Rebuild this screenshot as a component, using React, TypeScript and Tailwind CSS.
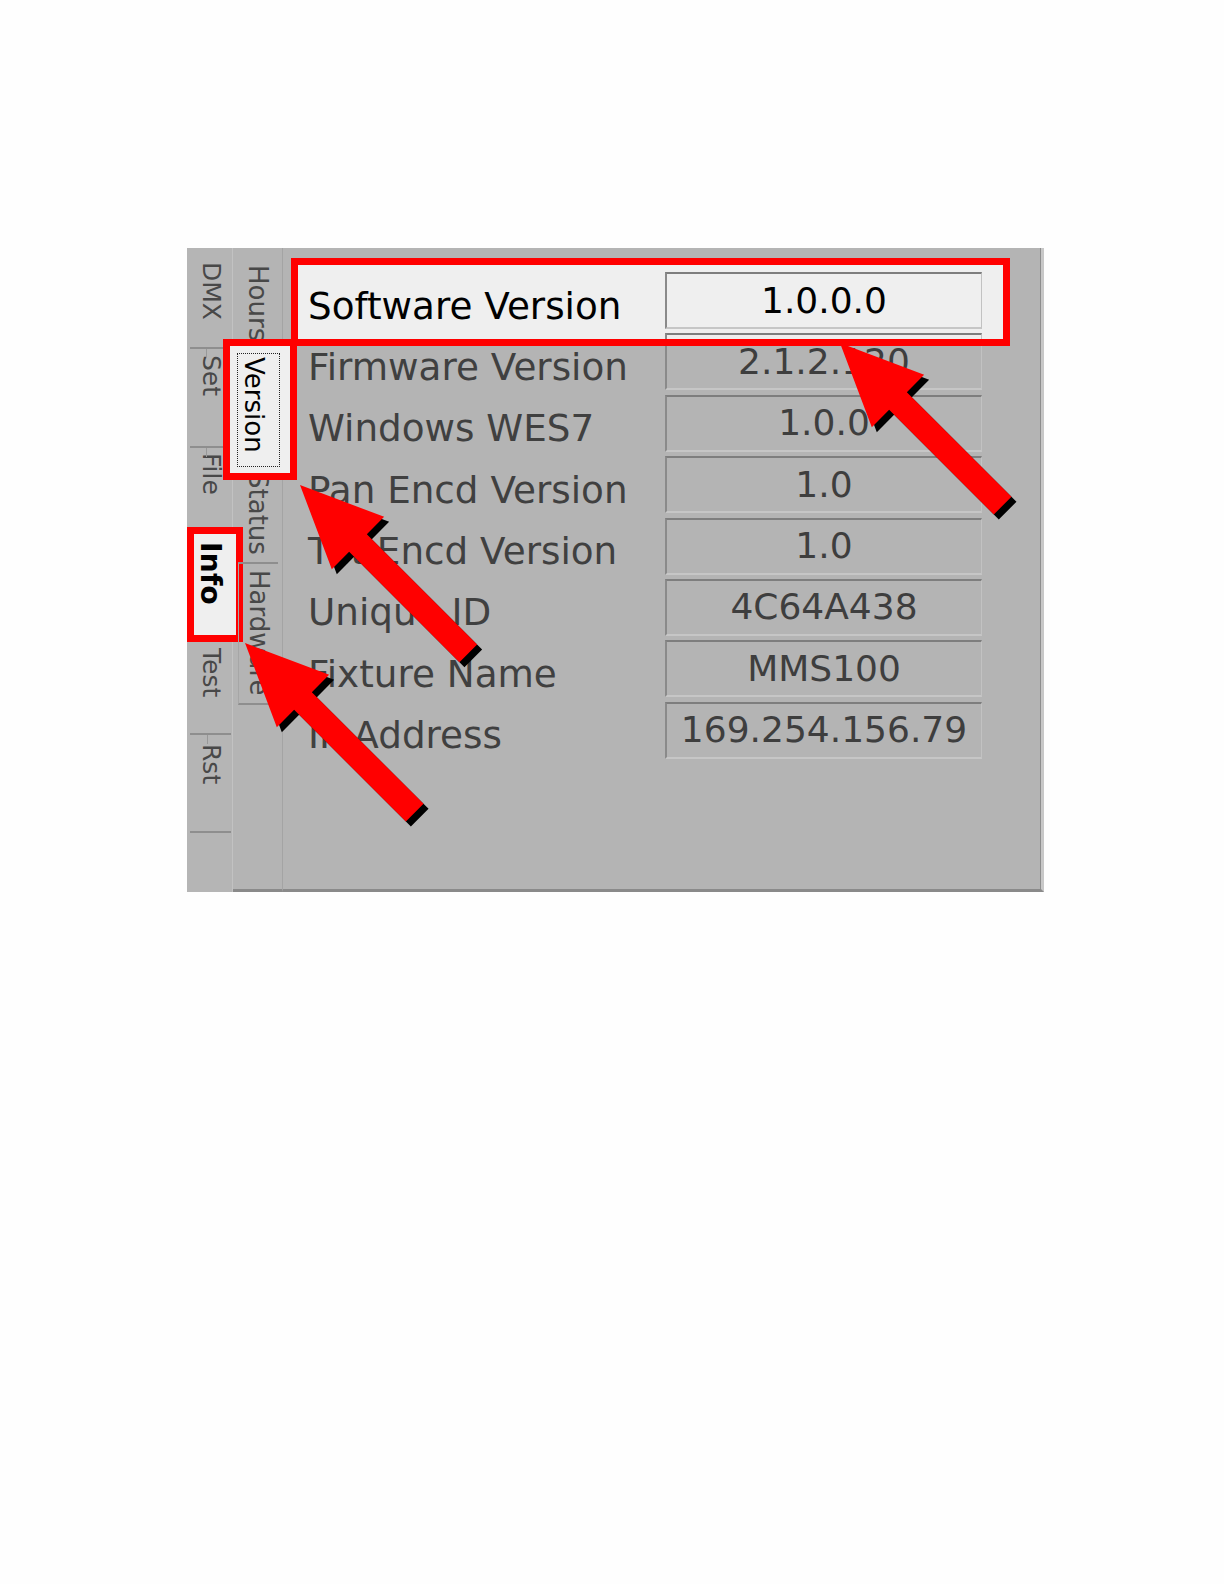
import React from "react";

const rows = [
  { label: "Software Version", value: "1.0.0.0" },
  { label: "Firmware Version", value: "2.1.2.120" },
  { label: "Windows WES7", value: "1.0.0" },
  { label: "Pan Encd Version", value: "1.0" },
  { label: "Tilt Encd Version", value: "1.0" },
  { label: "Unique ID", value: "4C64A438" },
  { label: "Fixture Name", value: "MMS100" },
  { label: "IP Address", value: "169.254.156.79" },
];

function Arrow({ x, y, len }: { x: number; y: number; len: number }) {
  const pts = `0,0 82,-37 82,-12.5 ${len},-12.5 ${len},12.5 82,12.5 82,37`;
  return (
    <g>
      <polygon points={pts} fill="#000000" transform={`translate(${x + 5} ${y + 5}) rotate(45)`} />
      <polygon points={pts} fill="#ff0000" transform={`translate(${x} ${y}) rotate(45)`} />
    </g>
  );
}

function Tick({ left }: { left: string }) {
  return <div className={`absolute top-0 ${left} h-[9px] w-px bg-[#989898]`} />;
}

export default function App() {
  return (
    <div className="relative min-h-[1584px] w-[1224px] bg-[#fefefe] pl-[187px] pt-[248px] font-['DejaVu_Sans',sans-serif]">
      <div className="flex h-[644px] w-[857px] bg-[#b4b4b4]">
        {/* Column 1: main tabs */}
        <div className="flex w-[46px] shrink-0 flex-col border-r border-[#c2c2c2] bg-[#b5b5b5] text-[25px] leading-[30px] text-[#484848]">
          <div className="ml-[3px] mr-px flex h-[99px] flex-col items-center pt-[14px]">
            <span className="[writing-mode:vertical-rl]">DMX</span>
          </div>
          <div className="relative ml-[3px] mr-px flex h-[99px] flex-col items-center border-t-2 border-[#8e8e8e] pt-[6px]">
            <Tick left="left-[16px]" />
            <span className="[writing-mode:vertical-rl]">Set</span>
          </div>
          <div className="relative ml-[3px] mr-px flex h-[81px] flex-col items-center border-t-2 border-[#8e8e8e] pt-[5px]">
            <Tick left="left-[16px]" />
            <span className="[writing-mode:vertical-rl]">File</span>
          </div>
          <div className="relative flex h-[115px] flex-col items-center pl-px pt-[15px]">
            <div className="absolute -right-[11px] bottom-0 left-0 top-0 border-[7px] border-[#ff0000] bg-[#efefef]" />
            <span className="relative text-[28.5px] font-bold text-black [writing-mode:vertical-rl]">Info</span>
          </div>
          <div className="ml-[3px] mr-px flex h-[91px] flex-col items-center pt-[6px]">
            <span className="[writing-mode:vertical-rl]">Test</span>
          </div>
          <div className="relative ml-[3px] mr-px flex h-[98px] flex-col items-center border-t-2 border-[#8e8e8e] pt-[9px]">
            <Tick left="left-[17px]" />
            <span className="[writing-mode:vertical-rl]">Rst</span>
          </div>
          <div className="ml-[3px] mr-px flex-1 border-t-2 border-[#8e8e8e]" />
        </div>

        {/* Column 2: sub tabs */}
        <div className="flex w-[50px] shrink-0 flex-col border-b-[3px] border-r border-b-[#8a8a8a] border-r-[#a4a4a4] text-[26px] leading-[30px] text-[#484848]">
          <div className="flex h-[95px] flex-col items-center overflow-hidden pt-[17px]">
            <span className="[writing-mode:vertical-rl]">Hours</span>
          </div>
          <div className="relative flex h-[127px] flex-col items-center pr-[8px] pt-[14px]">
            <div className="absolute -bottom-[10px] -left-[10px] -right-[15px] -top-[4px] border-[7px] border-[#ff0000] bg-[#efefef]" />
            <div className="absolute bottom-[3px] left-[4px] right-[2px] top-[10px] border border-dotted border-[#222]" />
            <span className="relative text-black [writing-mode:vertical-rl]">Version</span>
          </div>
          <div className="flex h-[92px] flex-col items-center pt-[2px]">
            <span className="[writing-mode:vertical-rl]">Status</span>
          </div>
          <div className="relative ml-[5px] mr-[4px] flex h-[143px] flex-col items-center border-b-2 border-l border-t-2 border-b-[#8e8e8e] border-l-[#a6a6a6] border-t-[#8e8e8e] pt-[6px]">
            <span className="[writing-mode:vertical-rl]">Hardware</span>
          </div>
          <div className="flex-1" />
        </div>

        {/* Content */}
        <div className="flex flex-1 flex-col border-b-[3px] border-r-[3px] border-b-[#8a8a8a] border-r-[#c8c8c8] pl-[25px] pt-[24px] shadow-[inset_-1px_0_0_#8e8e8e]">
          {rows.map((r, i) => {
            const first = i === 0;
            return (
              <div key={r.label} className="relative h-[61.4px] w-[674px] shrink-0">
                {first && (
                  <div className="absolute -bottom-[12.6px] -left-[17px] -right-[28px] -top-[14px] bg-[#efefef]" />
                )}
                <div className="relative flex">
                  <div
                    className={`flex h-[57px] w-[357px] items-center whitespace-nowrap pt-[11px] text-[37.3px] leading-[43px] ${
                      first ? "text-black" : "text-[#404040]"
                    }`}
                  >
                    {r.label}
                  </div>
                  <div
                    className={`flex h-[57px] w-[317px] items-center justify-center whitespace-nowrap border-b-2 border-l-2 border-r border-t-2 border-b-[#c6c6c6] border-l-[#8a8a8a] border-r-[#c2c2c2] border-t-[#7e7e7e] text-[36px] leading-[42px] ${
                      first ? "bg-[#efefef] text-black" : "text-[#3e3e3e]"
                    }`}
                  >
                    {r.value}
                  </div>
                </div>
                {first && (
                  <div className="absolute -bottom-[12.6px] -left-[17px] -right-[28px] -top-[14px] z-10 border-[7px] border-[#ff0000]" />
                )}
              </div>
            );
          })}
        </div>
      </div>

      <svg className="pointer-events-none absolute left-0 top-0 z-20" width={1224} height={1584}>
        <Arrow x={840} y={343} len={230} />
        <Arrow x={300} y={485} len={238} />
        <Arrow x={245} y={643} len={240} />
      </svg>
    </div>
  );
}
